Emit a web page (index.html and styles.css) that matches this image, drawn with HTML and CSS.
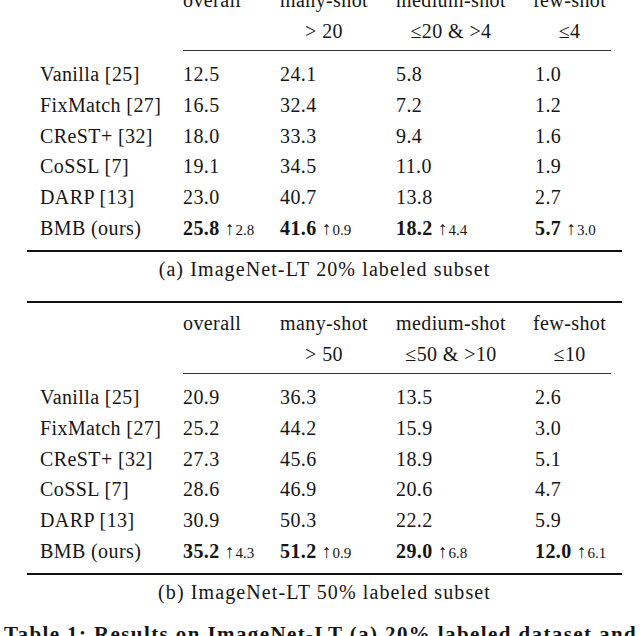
FILE: index.html
```html
<!DOCTYPE html>
<html>
<head>
<meta charset="utf-8">
<link rel="stylesheet" href="styles.css">
</head>
<body>
<div class="page">
  <section class="subtable first">
    <div class="grid head">
      <div></div>
      <div><span class="hstack"><span>overall</span></span></div>
      <div><span class="hstack"><span>many-shot</span><span>&gt; 20</span></span></div>
      <div><span class="hstack"><span>medium-shot</span><span>≤20 &amp; &gt;4</span></span></div>
      <div><span class="hstack"><span>few-shot</span><span>≤4</span></span></div>
    </div>
    <div class="midrule"></div>
    <div class="grid body">
      <div class="lab">Vanilla [25]</div><div>12.5</div><div>24.1</div><div>5.8</div><div class="few">1.0</div>
      <div class="lab">FixMatch [27]</div><div>16.5</div><div>32.4</div><div>7.2</div><div class="few">1.2</div>
      <div class="lab">CReST+ [32]</div><div>18.0</div><div>33.3</div><div>9.4</div><div class="few">1.6</div>
      <div class="lab">CoSSL [7]</div><div>19.1</div><div>34.5</div><div>11.0</div><div class="few">1.9</div>
      <div class="lab">DARP [13]</div><div>23.0</div><div>40.7</div><div>13.8</div><div class="few">2.7</div>
      <div class="lab">BMB (ours)</div><div><b>25.8</b> <small><span class="up">↑</span>2.8</small></div><div><b>41.6</b> <small><span class="up">↑</span>0.9</small></div><div><b>18.2</b> <small><span class="up">↑</span>4.4</small></div><div class="few"><b>5.7</b> <small><span class="up">↑</span>3.0</small></div>
    </div>
    <div class="bottomrule"></div>
    <p class="subcap">(a) ImageNet-LT 20% labeled subset</p>
  </section>

  <section class="subtable">
    <div class="grid head">
      <div></div>
      <div><span class="hstack"><span>overall</span></span></div>
      <div><span class="hstack"><span>many-shot</span><span>&gt; 50</span></span></div>
      <div><span class="hstack"><span>medium-shot</span><span>≤50 &amp; &gt;10</span></span></div>
      <div><span class="hstack"><span>few-shot</span><span>≤10</span></span></div>
    </div>
    <div class="midrule"></div>
    <div class="grid body">
      <div class="lab">Vanilla [25]</div><div>20.9</div><div>36.3</div><div>13.5</div><div class="few">2.6</div>
      <div class="lab">FixMatch [27]</div><div>25.2</div><div>44.2</div><div>15.9</div><div class="few">3.0</div>
      <div class="lab">CReST+ [32]</div><div>27.3</div><div>45.6</div><div>18.9</div><div class="few">5.1</div>
      <div class="lab">CoSSL [7]</div><div>28.6</div><div>46.9</div><div>20.6</div><div class="few">4.7</div>
      <div class="lab">DARP [13]</div><div>30.9</div><div>50.3</div><div>22.2</div><div class="few">5.9</div>
      <div class="lab">BMB (ours)</div><div><b>35.2</b> <small><span class="up">↑</span>4.3</small></div><div><b>51.2</b> <small><span class="up">↑</span>0.9</small></div><div><b>29.0</b> <small><span class="up">↑</span>6.8</small></div><div class="few"><b>12.0</b> <small><span class="up">↑</span>6.1</small></div>
    </div>
    <div class="bottomrule"></div>
    <p class="subcap">(b) ImageNet-LT 50% labeled subset</p>
  </section>

  <p class="caption">Table 1: Results on ImageNet-LT (a) 20% labeled dataset and (b) 50% labeled dataset.</p>
</div>
</body>
</html>
```

FILE: styles.css
```css
html, body {
  margin: 0;
  padding: 0;
  background: #fff;
}
body {
  width: 640px;
  height: 636px;
  overflow: hidden;
  font-family: "Liberation Serif", "DejaVu Serif", serif;
  font-size: 20px;
  color: #151515;
}
.page {
  margin-top: -22px;
}
.subtable {
  margin-left: 27px;
  width: 595px;
  border-top: 2px solid #111;
  padding-top: 5px;
}
.subtable + .subtable {
  margin-top: 15.5px;
}
.grid {
  display: grid;
  grid-template-columns: 156px 97px 116px 137px 1fr;
  letter-spacing: 0.4px;
}
.head {
  line-height: 31px;
}
.hstack {
  display: inline-flex;
  flex-direction: column;
  align-items: center;
}
.midrule {
  margin: 3px 11px 0 156px;
  border-top: 1px solid #333;
}
.body {
  margin-top: 8px;
  line-height: 30.8px;
}
.lab {
  padding-left: 13px;
}
.few {
  padding-left: 2px;
}
.body b {
  font-weight: bold;
}
.body small {
  font-size: 15px;
  letter-spacing: 0;
}
.up {
  font-size: 19px;
  margin-right: 1px;
}
.bottomrule {
  margin-top: 4.2px;
  border-top: 2px solid #111;
}
.subcap {
  margin: 2.5px 0 0;
  line-height: 31px;
  text-align: center;
  letter-spacing: 1.1px;
}
.caption {
  margin: 11px 0 0 4px;
  line-height: 31px;
  font-size: 21px;
  letter-spacing: 1.4px;
  font-weight: bold;
  white-space: nowrap;
}
```
